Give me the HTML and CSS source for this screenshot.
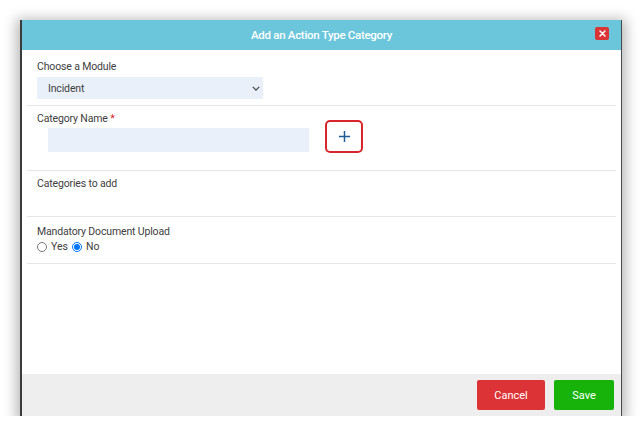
FILE: index.html
```html
<!doctype html>
<html>
  <head>
    <title>Add an Action Type Category</title>
    <link rel="stylesheet" href="styles.css">
  </head>
  <body>
    <div class="modal">
      <div class="modal-header">
        <span class="modal-title">Add an Action Type Category</span>
        <button class="close-btn" aria-label="Close">
          <svg viewBox="0 0 10 10" width="7" height="7">
            <path d="M1.5 1.5l7 7M8.5 1.5l-7 7" stroke="#fff" stroke-width="2.2" stroke-linecap="round" />
          </svg>
        </button>
      </div>

      <div class="modal-body">
        <div class="section">
          <label class="field-label">Choose a Module</label>
          <div class="select-box">
            <span>Incident</span>
            <svg viewBox="0 0 10 6" width="8" height="5">
              <path d="M1 1l4 4 4-4" fill="none" stroke="#444" stroke-width="1.6" />
            </svg>
          </div>
        </div>

        <div class="section section-name">
          <div class="name-col">
            <label class="field-label">Category Name <span class="req">*</span></label>
            <input class="text-input" type="text" />
          </div>
          <button class="add-btn" aria-label="Add">
            <svg viewBox="0 0 14 14" width="13" height="13">
              <path d="M7 1v12M1 7h12" stroke="#1e5b95" stroke-width="1.6" />
            </svg>
          </button>
        </div>

        <div class="section section-list">
          <label class="field-label">Categories to add</label>
        </div>

        <div class="section section-upload">
          <label class="field-label">Mandatory Document Upload</label>
          <div class="radios">
            <label><input type="radio" name="mandatory" /> Yes</label>
            <label><input type="radio" name="mandatory" checked /> No</label>
          </div>
        </div>
      </div>

      <div class="modal-footer">
        <button class="btn btn-cancel">Cancel</button>
        <button class="btn btn-save">Save</button>
      </div>
    </div>
  </body>
</html>
```

FILE: styles.css
```css
:root {
  --header-bg: #6bc6dc;
  --input-bg: #eaf0f9;
  --text-color: #404040;
  --divider: #e6e6e6;
  --danger: #dc3336;
  --success: #17b30b;
}

body {
  margin: 0;
  padding: 20px 0 0 20px;
  background: #ffffff;
  font-family: Roboto, "Liberation Sans", sans-serif;
  color: var(--text-color);
}

.modal {
  width: 602px;
  height: 396px;
  display: flex;
  flex-direction: column;
  background: #ffffff;
  border-left: 2px solid #3b3b3b;
  border-right: 1px solid #4a4a4a;
  box-sizing: border-box;
  box-shadow: 0 3px 12px 4px rgba(0, 0, 0, 0.28);
}

.modal-header {
  height: 30px;
  background: var(--header-bg);
  display: flex;
  align-items: center;
  justify-content: center;
  position: relative;
}

.modal-title {
  color: #ffffff;
  font-size: 11.5px;
  font-weight: 500;
  letter-spacing: -0.3px;
}

.close-btn {
  position: absolute;
  right: 12px;
  top: 7px;
  width: 14px;
  height: 13px;
  padding: 0;
  border: none;
  border-radius: 2px;
  background: var(--danger);
  display: flex;
  align-items: center;
  justify-content: center;
}

.modal-body {
  flex: 1;
  padding: 0 5px;
}

.section {
  padding: 10px 10px 6px;
  border-bottom: 1px solid var(--divider);
}

.field-label {
  display: block;
  font-size: 10.5px;
  letter-spacing: -0.15px;
  line-height: 13px;
  margin-bottom: 4px;
}

.req {
  color: #d9262c;
}

.select-box {
  width: 226px;
  height: 22px;
  box-sizing: border-box;
  background: var(--input-bg);
  display: flex;
  align-items: center;
  justify-content: space-between;
  padding: 0 3px 0 11px;
  font-size: 10.5px;
  letter-spacing: -0.15px;
}

.section-name {
  display: flex;
  align-items: flex-end;
  padding-top: 6px;
  padding-bottom: 18px;
}

.name-col .field-label {
  margin-bottom: 3px;
}

.text-input {
  display: block;
  margin-left: 11px;
  width: 261px;
  height: 24px;
  box-sizing: border-box;
  border: none;
  background: var(--input-bg);
}

.add-btn {
  margin-left: 16px;
  margin-bottom: -1px;
  width: 38px;
  height: 33px;
  padding: 0;
  border: 2px solid #d9262c;
  border-radius: 5px;
  background: #ffffff;
  display: flex;
  align-items: center;
  justify-content: center;
}

.section-list {
  height: 46px;
  box-sizing: border-box;
  padding-top: 6px;
}

.section-upload {
  padding-top: 8px;
  padding-bottom: 9px;
}

.section-upload .field-label {
  margin-bottom: 2px;
}

.radios {
  display: flex;
  gap: 4px;
  font-size: 10.5px;
  line-height: 14px;
}

.radios label {
  display: flex;
  align-items: center;
  gap: 4px;
}

.radios input {
  margin: 0;
  width: 10px;
  height: 10px;
}

.modal-footer {
  height: 42px;
  background: #eeeeee;
  display: flex;
  align-items: center;
  justify-content: flex-end;
  gap: 9px;
  padding-right: 7px;
}

.btn {
  height: 30px;
  border: none;
  border-radius: 2px;
  color: #ffffff;
  font-family: Roboto, "Liberation Sans", sans-serif;
  font-size: 11px;
}

.btn-cancel {
  width: 68px;
  background: var(--danger);
}

.btn-save {
  width: 60px;
  background: var(--success);
}
```
